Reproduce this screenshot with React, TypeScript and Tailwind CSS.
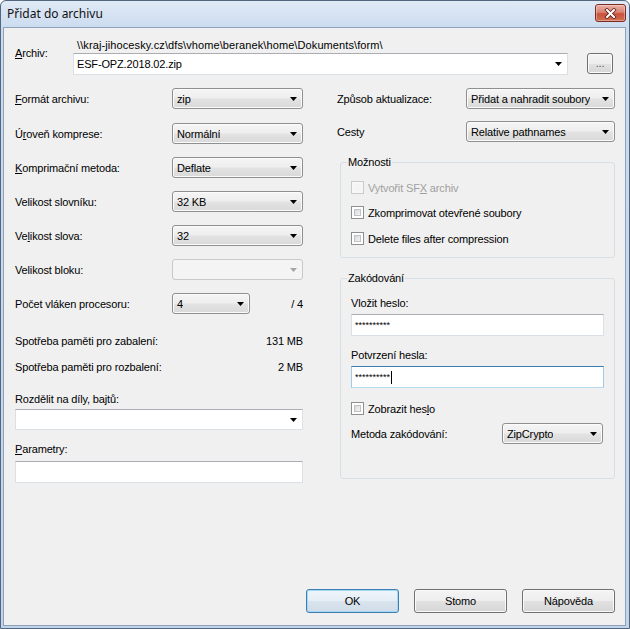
import React from "react";

const Arrow = ({ disabled }: { disabled?: boolean }) => (
  <svg width="7" height="4" viewBox="0 0 7 4" className="shrink-0">
    <polygon points="0,0 7,0 3.5,4" fill={disabled ? "#a6a6a6" : "#000"} />
  </svg>
);

function Combo({ className = "", text, disabled }: { className?: string; text?: string; disabled?: boolean }) {
  return (
    <div
      className={`flex h-[21px] items-center justify-between rounded-[3px] border pl-[4px] pr-[5px] ${
        disabled
          ? "border-[#c9c9c9] bg-[#f4f4f4]"
          : "border-[#8e8f8f] bg-[linear-gradient(to_bottom,#f5f5f5_0%,#eeeeee_45%,#e2e2e2_55%,#d9d9d9_100%)] shadow-[inset_0_0_0_1px_#fbfbfb]"
      } ${className}`}
    >
      <span className="truncate leading-[14px]">{text}</span>
      <Arrow disabled={disabled} />
    </div>
  );
}

function EditCombo({ className = "", text }: { className?: string; text?: string }) {
  return (
    <div
      className={`flex items-center justify-between border border-[#dbdfe6] border-t-[#abadb3] bg-white pl-[3px] pr-[5px] ${className}`}
    >
      <span className="leading-[14px]">{text}</span>
      <Arrow />
    </div>
  );
}

function TextBox({ className = "", children, focused }: { className?: string; children?: React.ReactNode; focused?: boolean }) {
  return (
    <div
      className={`flex h-[22px] w-full items-center border bg-white pl-[3px] ${
        focused
          ? "border-[#a4c9e3] border-t-[#3d7bad] border-b-[#b7d9ed]"
          : "border-[#dbdfe6] border-t-[#abadb3]"
      } ${className}`}
    >
      {children}
    </div>
  );
}

function Check({ label, disabled }: { label: React.ReactNode; disabled?: boolean }) {
  return (
    <div className="flex h-[13px] items-center">
      <div
        className={`h-[13px] w-[13px] shrink-0 border p-[2px] ${
          disabled ? "border-[#cacaca] bg-[#f7f7f7]" : "border-[#8e8f8f] bg-white"
        }`}
      >
        <div
          className={`h-full w-full ${
            disabled
              ? "bg-[#f4f4f4]"
              : "bg-[linear-gradient(135deg,#cfd1d4_0%,#e6e7e8_50%,#f7f7f7_100%)] shadow-[inset_0_0_0_1px_#bfc2c6]"
          }`}
        />
      </div>
      <span className={`ml-[4px] leading-[14px] ${disabled ? "text-[#a0a0a0]" : ""}`}>{label}</span>
    </div>
  );
}

function Btn({ children, className = "", def }: { children: React.ReactNode; className?: string; def?: boolean }) {
  return (
    <div
      className={`flex items-center justify-center rounded-[3px] border ${
        def
          ? "border-[#3c7fb1] bg-[linear-gradient(to_bottom,#eef5fa_0%,#e6eef5_50%,#d9e4ee_52%,#d0dce8_100%)] shadow-[inset_0_0_0_1px_#a6d7f4]"
          : "border-[#707070] bg-[linear-gradient(to_bottom,#f4f4f4_0%,#ededed_50%,#e1e1e1_52%,#d6d6d6_100%)] shadow-[inset_0_0_0_1px_#fbfbfb]"
      } ${className}`}
    >
      {children}
    </div>
  );
}

function Row({ label, children, cols = "grid-cols-[157px_131px]" }: { label: React.ReactNode; children: React.ReactNode; cols?: string }) {
  return (
    <div className={`grid h-[21px] items-center ${cols}`}>
      <span className="leading-[14px]">{label}</span>
      {children}
    </div>
  );
}

function Group({ title, className = "", children }: { title: string; className?: string; children: React.ReactNode }) {
  return (
    <div className={`relative ml-[3px] rounded-[3px] border border-[#d5dfe5] px-[10px] ${className}`}>
      <span className="absolute left-[6px] top-[-8px] bg-[#f0f0f0] px-[1px] leading-[14px]">{title}</span>
      {children}
    </div>
  );
}

export default function App() {
  return (
    <div className="h-[629px] w-[630px] overflow-hidden bg-white font-['Liberation_Sans',Arial,sans-serif] text-[11px] tracking-[-0.15px] text-black">
      <div className="flex h-[629px] w-[630px] flex-col rounded-t-[6px] border border-[#52667f] bg-[linear-gradient(to_bottom,#e0eaf6_0px,#ccdcef_26px,#c2d4ea_100%)]">
        {/* Title bar */}
        <div className="flex h-[26px] shrink-0 items-start justify-between pl-[6px] pr-[3px]">
          <span className="mt-[5px] font-['Noto_Sans',sans-serif] text-[12px] leading-[16px] tracking-normal text-[#111]">
            Přidat do archivu
          </span>
          <div className="mt-[3px] flex h-[18px] w-[31px] items-center justify-center rounded-[3px] border border-[#7a2c24] bg-[linear-gradient(to_bottom,#eab0a4_0%,#d98473_45%,#c9513d_55%,#d2704f_100%)] shadow-[inset_0_0_0_1px_rgba(255,255,255,0.35)]">
            <svg width="13" height="11" viewBox="0 0 13 11">
              <path d="M3 2 L10 9 M10 2 L3 9" stroke="#5b1d16" strokeWidth="3.6" strokeLinecap="square" />
              <path d="M3 2 L10 9 M10 2 L3 9" stroke="#ffffff" strokeWidth="2" strokeLinecap="square" />
            </svg>
          </div>
        </div>

        {/* Client area */}
        <div className="mb-[2px] ml-[2px] mr-[3px] flex flex-1 flex-col border border-[#8da1ba] bg-[#f0f0f0] pb-[12px] pl-[11px] pr-[10px]">
          {/* Archiv */}
          <div className="flex pt-[10px]">
            <div className="w-[58px] shrink-0 pt-[8px] leading-[14px]">
              <u>A</u>rchiv:
            </div>
            <div className="flex flex-col">
              <div className="h-[14px] pl-[4px] leading-[14px] tracking-[0.1px]">
                {"\\\\kraj-jihocesky.cz\\dfs\\vhome\\beranek\\home\\Dokuments\\form\\"}
              </div>
              <div className="mt-[1px] flex items-start">
                <EditCombo className="h-[22px] w-[495px]" text="ESF-OPZ.2018.02.zip" />
                <Btn className="ml-[19px] h-[21px] w-[26px] text-[#555]">...</Btn>
              </div>
            </div>
          </div>

          {/* Two columns */}
          <div className="mt-[13px] flex">
            {/* Left */}
            <div className="flex w-[288px] flex-col">
              <Row label={<><u>F</u>ormát archivu:</>}>
                <Combo text="zip" />
              </Row>
              <div className="mt-[14px]">
                <Row label={<>Ú<u>r</u>oveň komprese:</>}>
                  <Combo text="Normální" />
                </Row>
              </div>
              <div className="mt-[13px]">
                <Row label={<><u>K</u>omprimační metoda:</>}>
                  <Combo text="Deflate" />
                </Row>
              </div>
              <div className="mt-[13px]">
                <Row label="Velikost slovníku:">
                  <Combo text="32 KB" />
                </Row>
              </div>
              <div className="mt-[13px]">
                <Row label={<>Ve<u>l</u>ikost slova:</>}>
                  <Combo text="32" />
                </Row>
              </div>
              <div className="mt-[13px]">
                <Row label="Velikost bloku:">
                  <Combo disabled />
                </Row>
              </div>
              <div className="mt-[13px] grid h-[21px] grid-cols-[157px_78px_1fr] items-center">
                <span className="leading-[14px]">Počet vláken procesoru:</span>
                <Combo text="4" />
                <span className="text-right leading-[14px]">/ 4</span>
              </div>
              <div className="mt-[20px] flex h-[14px] justify-between leading-[14px]">
                <span>Spotřeba paměti pro zabalení:</span>
                <span>131 MB</span>
              </div>
              <div className="mt-[12px] flex h-[14px] justify-between leading-[14px]">
                <span>Spotřeba paměti pro rozbalení:</span>
                <span>2 MB</span>
              </div>
              <div className="mt-[18px] h-[14px] leading-[14px]">Rozdělit na díly, bajtů:</div>
              <EditCombo className="mt-[3px] h-[21px] w-full" />
              <div className="mt-[12px] h-[14px] leading-[14px]">
                <u>P</u>arametry:
              </div>
              <TextBox className="mt-[5px]" />
            </div>

            {/* Right */}
            <div className="ml-[34px] flex w-[278px] flex-col">
              <Row label="Způsob aktualizace:" cols="grid-cols-[129px_149px]">
                <Combo text="Přidat a nahradit soubory" />
              </Row>
              <div className="mt-[12px]">
                <Row label="Cesty" cols="grid-cols-[129px_149px]">
                  <Combo text="Relative pathnames" />
                </Row>
              </div>

              <Group title="Možnosti" className="mt-[20px] h-[96px] pt-[18px]">
                <Check disabled label={<>Vytvořit SF<u>X</u> archiv</>} />
                <div className="mt-[12px]">
                  <Check label="Zkomprimovat otevřené soubory" />
                </div>
                <div className="mt-[13px]">
                  <Check label="Delete files after compression" />
                </div>
              </Group>

              <Group title="Zakódování" className="mt-[20px] h-[201px] pt-[17px]">
                <div className="h-[14px] leading-[14px]">Vložit heslo:</div>
                <TextBox className="mt-[4px]">
                  <span className="text-[9px] leading-[12px] tracking-normal">**********</span>
                </TextBox>
                <div className="mt-[12px] h-[14px] leading-[14px]">Potvrzení hesla:</div>
                <TextBox focused className="mt-[4px]">
                  <span className="text-[9px] leading-[12px] tracking-normal">**********</span>
                  <span className="ml-[1px] inline-block h-[13px] w-[1px] bg-black" />
                </TextBox>
                <div className="mt-[14px]">
                  <Check label={<>Zobrazit hes<u>l</u>o</>} />
                </div>
                <div className="mt-[8px] grid h-[21px] grid-cols-[151px_101px] items-center">
                  <span className="leading-[14px]">Metoda zakódování:</span>
                  <Combo text="ZipCrypto" />
                </div>
              </Group>
            </div>
          </div>

          {/* Buttons */}
          <div className="mt-auto flex justify-end gap-[15px]">
            <Btn def className="h-[24px] w-[93px]">
              OK
            </Btn>
            <Btn className="h-[24px] w-[93px]">Stomo</Btn>
            <Btn className="h-[24px] w-[93px]">Nápověda</Btn>
          </div>
        </div>
      </div>
    </div>
  );
}
